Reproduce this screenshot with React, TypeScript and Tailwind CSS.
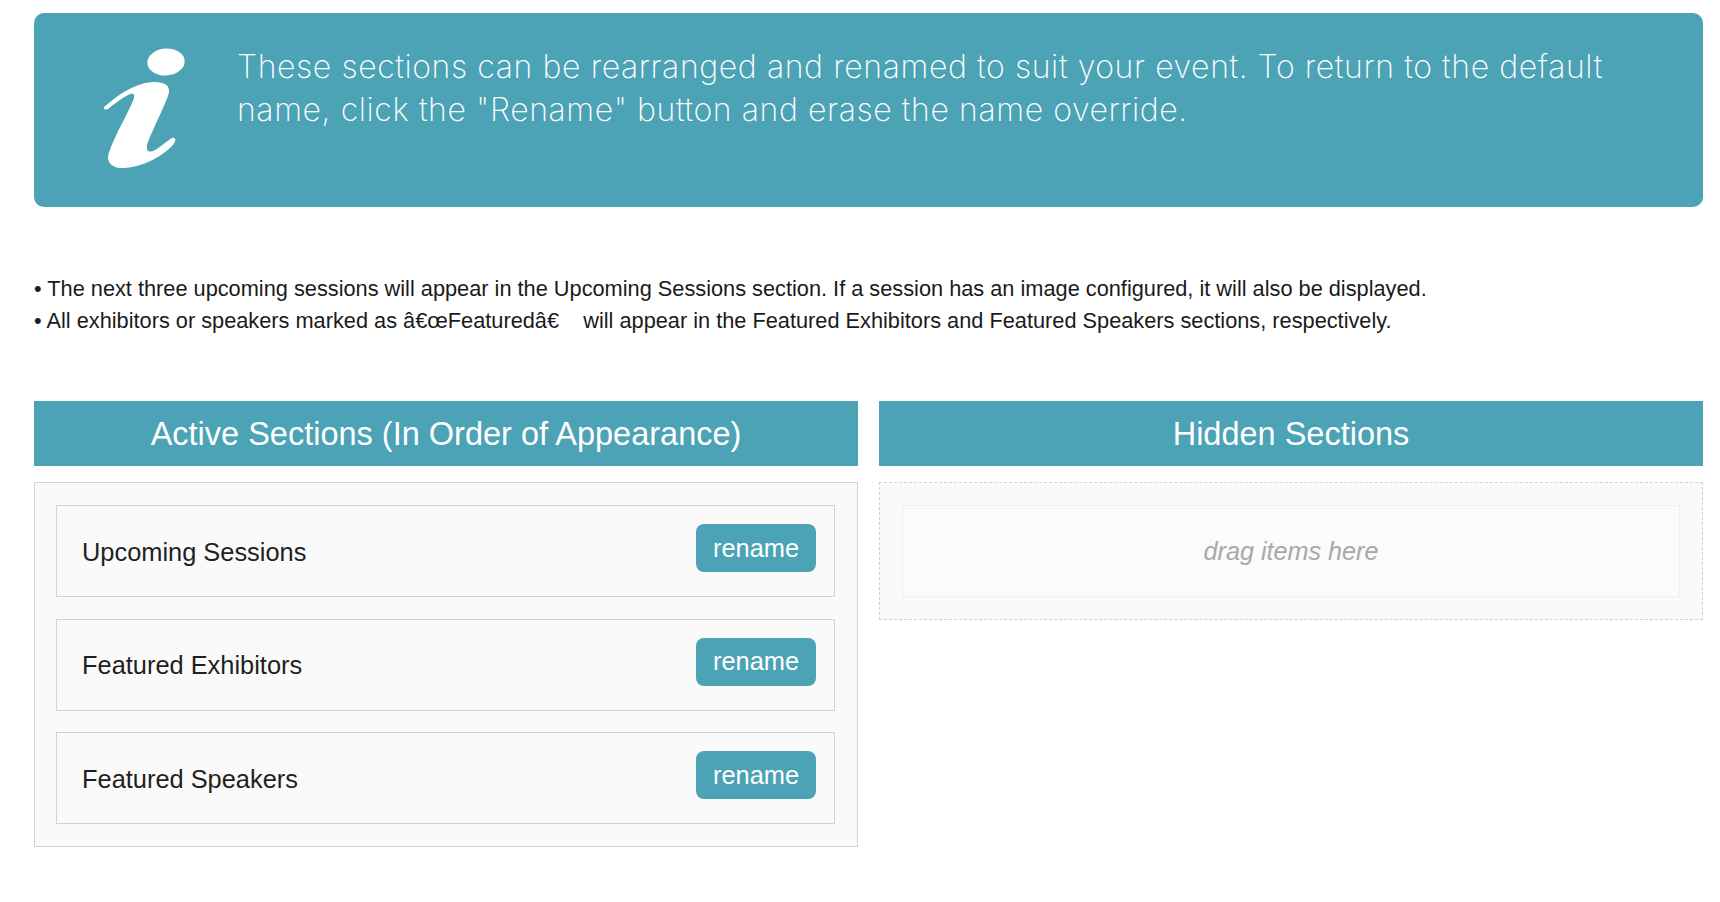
import React from 'react';

const sans = 'font-["Liberation_Sans",Arial,sans-serif]';

function InfoIcon() {
  return (
    <svg width="90" height="130" viewBox="98 42 90 130" className="shrink-0" fill="#fff">
      <ellipse cx="166" cy="62" rx="18.7" ry="13.5" transform="rotate(-4 166 62)" />
      <path d="M104 107 C113 100 125 88 145 83 C160 80 170 83 169 92 C168 100 152 130 147 145 C146 152 150 153 155 150 C162 146 168 140 172 138 C177 137 176 142 172 146 C160 158 140 168 122 168 C110 168 105 160 110 150 C115 135 130 110 134 98 C135 93 132 93 128 95 C120 99 112 106 108 109 C105 110 103 109 104 107 Z" />
    </svg>
  );
}

function SectionRow({ name }: { name: string }) {
  return (
    <div className="flex h-[92px] items-center justify-between border border-[#cbd5dc] pl-[25px] pr-[18px]">
      <span className="mt-[2px] text-[25.4px] text-[#1f1f1f]">{name}</span>
      <button className="mb-[6px] h-[48px] w-[120px] rounded-lg bg-[#4ba3b5] text-[25.4px] text-white">rename</button>
    </div>
  );
}

export default function App() {
  const sections = ['Upcoming Sessions', 'Featured Exhibitors', 'Featured Speakers'];

  return (
    <div className={`min-h-[902px] bg-white pl-[34px] pr-[17px] pt-[13px] ${sans}`}>
      {/* Info banner */}
      <div className="flex h-[194px] items-start rounded-[10px] bg-[#4ba3b5] pl-[64px] pr-[60px] pt-[29px]">
        <InfoIcon />
        <p className="ml-[49px] mt-[3px] font-['Inter',sans-serif] text-[32px] font-extralight leading-[43px] tracking-[0.6px] text-white">
          These sections can be rearranged and renamed to suit your event. To return to the default name, click the "Rename" button and erase the name override.
        </p>
      </div>

      {/* Notes */}
      <div className="mt-[66px] text-[21.75px] leading-[32px] text-[#1a1a1a]">
        <div>• The next three upcoming sessions will appear in the Upcoming Sessions section. If a session has an image configured, it will also be displayed.</div>
        <div className="whitespace-pre">• All exhibitors or speakers marked as â€œFeaturedâ€    will appear in the Featured Exhibitors and Featured Speakers sections, respectively.</div>
      </div>

      {/* Columns */}
      <div className="mt-[64px] grid grid-cols-2 gap-[21px]">
        <div>
          <h2 className="flex h-[65px] items-center justify-center bg-[#4ba3b5] pt-[2px] text-[32.5px] text-white">Active Sections (In Order of Appearance)</h2>
          <div className="mt-[16px] flex flex-col gap-[21.5px] border border-[#cbd5dc] bg-[#fafafa] pb-[22px] pl-[21px] pr-[22px] pt-[22px]">
            {sections.map((s) => (
              <SectionRow key={s} name={s} />
            ))}
          </div>
        </div>
        <div>
          <h2 className="flex h-[65px] items-center justify-center bg-[#4ba3b5] pt-[2px] text-[32.5px] text-white">Hidden Sections</h2>
          <div className="mt-[16px] border border-dashed border-[#cbd5dc] bg-[#fafafa] p-[22px]">
            <div className="flex h-[92px] items-center justify-center border border-dotted border-[#e2e6e9] bg-[#fbfbfb] text-[25.2px] italic text-[#a8a8a8]">
              <span className="mt-[2px]">drag items here</span>
            </div>
          </div>
        </div>
      </div>
    </div>
  );
}
